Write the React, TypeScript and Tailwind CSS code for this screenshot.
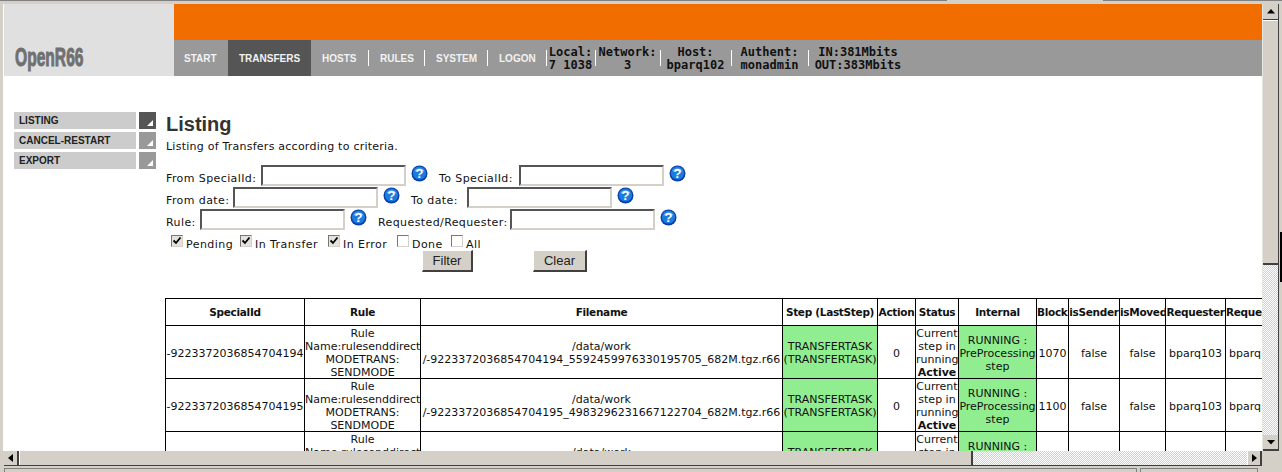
import React from "react";

const body = "font-['DejaVu_Sans',Verdana,sans-serif] text-[11px] leading-[13px] text-[#111]";

function Help() {
  return (
    <svg width="17" height="17" viewBox="0 0 17 17" className="shrink-0">
      <circle cx="8.5" cy="8.5" r="8" fill="#0a3fa8" />
      <circle cx="8.5" cy="8" r="6.6" fill="#1c7be0" />
      <path d="M3.5 6.5a5.5 5 0 0 1 10 0a9 6 0 0 0-10 0z" fill="#8cc4f5" />
      <text x="8.5" y="13" textAnchor="middle" fill="#fff" fontSize="13" fontWeight="700" fontFamily="Liberation Sans, sans-serif">?</text>
    </svg>
  );
}

function Field({ label, labelW, gapAfter }: { label: string; labelW: string; gapAfter: string }) {
  return (
    <div className={`flex items-start ${gapAfter}`}>
      <span className={`${labelW} pt-[7px] whitespace-nowrap tracking-[0.4px]`}>{label}</span>
      <span className="block w-[145px] h-[21px] border-2 border-t-[#555] border-l-[#555] border-r-[#d4d0c8] border-b-[#d4d0c8] bg-white" />
      <span className="ml-[5px]"><Help /></span>
    </div>
  );
}

function Check({ label, checked, w }: { label: string; checked?: boolean; w: string }) {
  return (
    <div className={`flex items-start ${w}`}>
      <span className={`block w-[12px] h-[12px] border border-t-[#777] border-l-[#777] border-r-[#d4d0c8] border-b-[#d4d0c8] ${checked ? "bg-[#e4e2dc]" : "bg-white"}`}>
        {checked && (
          <svg width="10" height="10" viewBox="0 0 10 10">
            <path d="M1.5 4.5 L4 7 L8.5 1.5" stroke="#000" strokeWidth="1.8" fill="none" />
          </svg>
        )}
      </span>
      <span className="ml-[3px] pt-[3px] whitespace-nowrap tracking-[0.45px]">{label}</span>
    </div>
  );
}

function Btn({ label, w }: { label: string; w: string }) {
  return (
    <span className={`${w} h-[22px] flex items-center justify-center bg-[#d4d0c8] border border-t-white border-l-white border-r-2 border-b-2 border-r-[#404040] border-b-[#404040] font-['Liberation_Sans',Arial,sans-serif] text-[13px] text-[#222]`}>
      {label}
    </span>
  );
}

function SideItem({ label, active }: { label: string; active?: boolean }) {
  return (
    <div className="flex h-[17px] mb-[3px]">
      <div className="w-[122px] bg-[#cccccc] pl-[5px] flex items-center font-['Liberation_Sans',Arial,sans-serif] font-bold text-[10px] text-[#222]">{label}</div>
      <div className={`ml-[3px] w-[17px] flex items-end justify-end ${active ? "bg-[#555555]" : "bg-[#999999]"}`}>
        <svg width="8" height="8" viewBox="0 0 8 8" className="mb-[2px] mr-[2px]"><path d="M7 1 V7 H1 Z" fill="#fff" /></svg>
      </div>
    </div>
  );
}

const navItems = ["HOSTS", "RULES", "SYSTEM", "LOGON"];
const stats = [
  ["Local:", "7 1038", "w-[49px]"],
  ["Network:", "3", "w-[65px]"],
  ["Host:", "bparq102", "w-[71px]"],
  ["Authent:", "monadmin", "w-[77px]"],
  ["IN:381Mbits", "OUT:383Mbits", "w-[100px]"],
];

const cols = [139, 116, 362, 95, 38, 43, 78, 32, 51, 46, 60, 60];
const heads = ["SpecialId", "Rule", "Filename", "Step (LastStep)", "Action", "Status", "Internal", "Blocks", "isSender", "isMoved", "Requester", "Requested"];
const rows = [
  ["-9223372036854704194", "/-9223372036854704194_5592459976330195705_682M.tgz.r66", "1070"],
  ["-9223372036854704195", "/-9223372036854704195_4983296231667122704_682M.tgz.r66", "1100"],
  ["-9223372036854704196", "/-9223372036854704196_4983296231667122705_682M.tgz.r66", "1090"],
];
const td = "border border-black p-0 text-center overflow-hidden whitespace-nowrap";
const th = "border border-black p-0 text-center overflow-hidden whitespace-nowrap font-bold text-[10.5px] tracking-[-0.3px]";

function Cell({ green, children }: { green?: boolean; children: React.ReactNode }) {
  return (
    <td className={`${td} ${green ? "bg-[#90ee90]" : ""}`}>
      <div className="translate-y-px">{children}</div>
    </td>
  );
}

export default function App() {
  return (
    <div className={`relative w-[1282px] h-[472px] overflow-hidden flex flex-col bg-[#d4d0c8] ${body}`}>
      <div className="h-[4px] shrink-0 border-t border-[#808080] flex">
        <div className="w-[947px]" />
        <div className="w-[156px] -mt-px h-px bg-[#d4d0c8]" />
      </div>
      <div className="flex h-[447px] shrink-0">
        <div className="w-[4px] shrink-0 border-r border-white" />
        <main className="w-[1258px] h-[447px] overflow-hidden bg-white shrink-0">
          <header className="flex h-[72px]">
            <div className="w-[170px] bg-[#e0e0e0] flex items-end pb-[5px] pl-[11px]">
              <span className="origin-left scale-x-[0.6] font-['Liberation_Sans',Arial,sans-serif] font-bold text-[26px] leading-[28px] text-[#707070] [-webkit-text-stroke:1px_#707070]">OpenR66</span>
            </div>
            <div className="flex-1 flex flex-col">
              <div className="h-[36px] bg-[#f26d00]" />
              <nav className="h-[36px] bg-[#999999] flex items-center font-['Liberation_Sans',Arial,sans-serif] font-bold text-[10px] text-[#f2f2f2]">
                <span className="w-[54px] pl-[10px]">START</span>
                <span className="w-[83px] h-full flex items-center pl-[11px] bg-[#555555]">TRANSFERS</span>
                {navItems.map((n, i) => (
                  <span key={n} className={`flex items-center h-4 pl-[11px] ${i > 0 ? "border-l border-white" : ""} ${["w-[57px]", "w-[56px]", "w-[63px]", "w-[59px]"][i]}`}>{n}</span>
                ))}
                <div className="flex h-full font-['DejaVu_Sans_Mono',monospace] text-[12px] leading-[13px] text-[#111]">
                  {stats.map(([a, b, w]) => (
                    <div key={a} className={`${w} pt-[6px] relative text-center whitespace-nowrap`}>
                      <span className="absolute left-0 top-[10px] h-4 w-px bg-white" />
                      <div>{a}</div>
                      <div>{b}</div>
                    </div>
                  ))}
                </div>
              </nav>
            </div>
          </header>
          <div className="flex">
            <aside className="w-[162px] shrink-0 pl-[10px] pt-[36px]">
              <SideItem label="LISTING" active />
              <SideItem label="CANCEL-RESTART" />
              <SideItem label="EXPORT" />
            </aside>
            <section className="pt-[36px] min-w-0">
              <h1 className="font-['Liberation_Sans',Arial,sans-serif] font-bold text-[20px] leading-[24px] text-[#333]">Listing</h1>
              <p className="mt-[4px] h-[25px] tracking-[0.24px]">Listing of Transfers according to criteria.</p>
              <div className="flex h-[22px]">
                <Field label="From SpecialId:" labelW="w-[95px]" gapAfter="w-[273px]" />
                <Field label="To SpecialId:" labelW="w-[80px]" gapAfter="" />
              </div>
              <div className="flex h-[22px]">
                <Field label="From date:" labelW="w-[67px]" gapAfter="w-[245px]" />
                <Field label="To date:" labelW="w-[56px]" gapAfter="" />
              </div>
              <div className="flex h-[22px]">
                <Field label="Rule:" labelW="w-[34px]" gapAfter="w-[212px]" />
                <Field label="Requested/Requester:" labelW="w-[132px]" gapAfter="" />
              </div>
              <div className="flex pl-[5px] h-[20px] pt-[4px]">
                <Check label="Pending" checked w="w-[69px]" />
                <Check label="In Transfer" checked w="w-[88px]" />
                <Check label="In Error" checked w="w-[69px]" />
                <Check label="Done" w="w-[54px]" />
                <Check label="All" w="w-[40px]" />
              </div>
              <div className="flex pl-[256px] mt-[-1px] h-[24px]">
                <Btn label="Filter" w="w-[51px]" />
                <span className="w-[60px]" />
                <Btn label="Clear" w="w-[54px]" />
              </div>
              <table className="table-fixed border-collapse ml-[-1px] mt-[24px] w-[1120px]">
                <colgroup>
                  {cols.map((c, i) => <col key={i} style={{ width: c }} />)}
                </colgroup>
                <thead>
                  <tr className="h-[27px]">
                    {heads.map((h) => <th key={h} className={th}>{h}</th>)}
                  </tr>
                </thead>
                <tbody>
                  {rows.map(([id, file, block]) => (
                    <tr key={id} className="h-[53px]">
                      <Cell>{id}</Cell>
                      <Cell>Rule<br />Name:rulesenddirect<br />MODETRANS:<br />SENDMODE</Cell>
                      <Cell>/data/work<br />{file}</Cell>
                      <Cell green>TRANSFERTASK<br />(TRANSFERTASK)</Cell>
                      <Cell>0</Cell>
                      <Cell>Current<br />step in<br />running<br /><b>Active</b></Cell>
                      <Cell green>RUNNING :<br />PreProcessing<br />step</Cell>
                      <Cell>{block}</Cell>
                      <Cell>false</Cell>
                      <Cell>false</Cell>
                      <Cell>bparq103</Cell>
                      <Cell>bparq103</Cell>
                    </tr>
                  ))}
                </tbody>
              </table>
            </section>
          </div>
        </main>
        <div className="w-[17px] shrink-0 flex flex-col border-l border-[#e8e6e0] border-r border-r-[#404040]">
          <span className="h-[16px] flex items-center justify-center border-b border-[#404040] bg-[#d4d0c8]">
            <svg width="8" height="5"><path d="M4 0 L8 4.5 H0 Z" fill="#000" /></svg>
          </span>
          <span className="h-[245px] bg-[#d4d0c8] border-t border-white border-b-2 border-b-[#404040]" />
          <span className="flex-1 bg-[repeating-conic-gradient(#d4d0c8_0_25%,#ffffff_0_50%)] bg-[length:2px_2px]" />
          <span className="h-[16px] flex items-center justify-center border-b-2 border-[#404040] bg-[#d4d0c8]">
            <svg width="8" height="5"><path d="M0 0 H8 L4 4.5 Z" fill="#000" /></svg>
          </span>
        </div>
        <div className="w-[3px] shrink-0" />
      </div>
      <div className="h-[15px] shrink-0 flex">
        <div className="w-[4px] shrink-0" />
        <div className="w-[1258px] flex border-b border-[#404040]">
          <span className="w-[15px] flex items-center justify-center border-r-2 border-[#404040]">
            <svg width="5" height="8"><path d="M0 4 L5 0 V8 Z" fill="#000" /></svg>
          </span>
          <span className="w-[954px] border-l border-white border-r-2 border-r-[#404040] bg-[#d4d0c8]" />
          <span className="flex-1 bg-[repeating-conic-gradient(#d4d0c8_0_25%,#ffffff_0_50%)] bg-[length:2px_2px]" />
          <span className="w-[15px] flex items-center justify-center border-l border-white border-r-2 border-r-[#404040]">
            <svg width="5" height="8"><path d="M5 4 L0 0 V8 Z" fill="#000" /></svg>
          </span>
        </div>
      </div>
      <div className="h-[6px] shrink-0 flex pt-[2px] pl-[4px]">
        <div className="w-[1133px] border border-b-0 border-[#808080]" />
        <div className="ml-[3px] w-[118px] border border-b-0 border-[#808080]" />
      </div>
      <span className="absolute right-0 top-[232px] h-[50px] w-[2px] bg-black" />
    </div>
  );
}
